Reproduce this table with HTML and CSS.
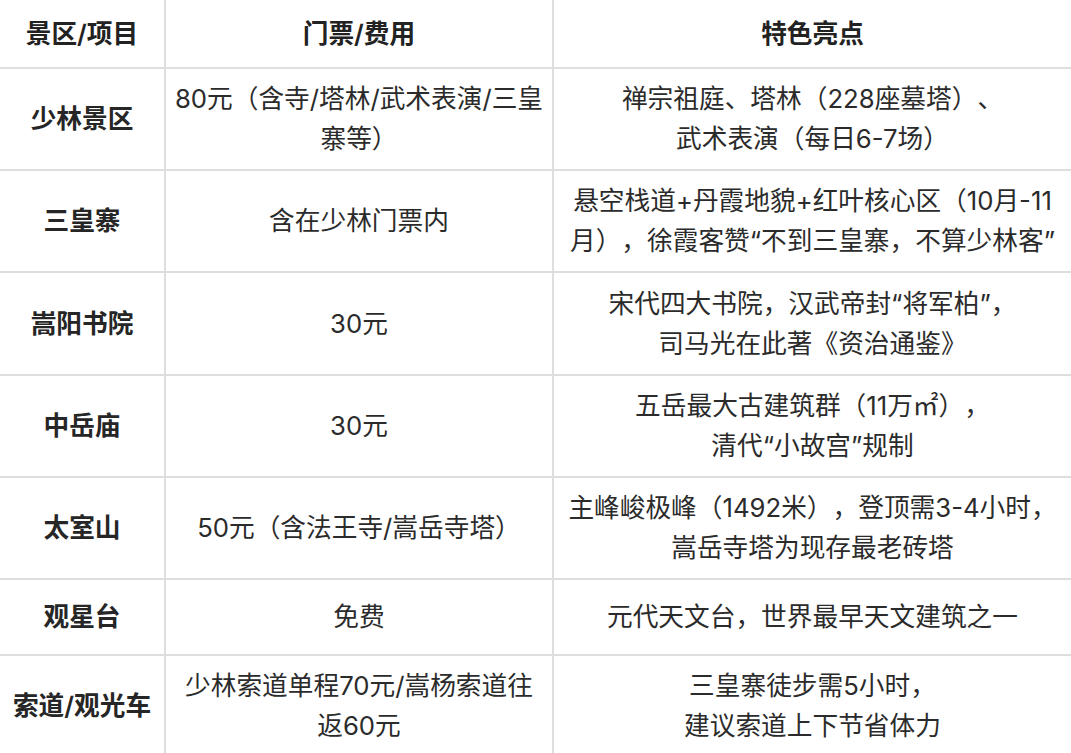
FILE: index.html
```html
<!DOCTYPE html>
<html lang="zh-CN">
<head>
<meta charset="utf-8">
<title>登封景区门票</title>
<link rel="stylesheet" href="styles.css">
</head>
<body>
<div class="grid">
  <div class="cell head">景区/项目</div>
  <div class="cell head">门票/费用</div>
  <div class="cell head">特色亮点</div>

  <div class="cell name">少林景区</div>
  <div class="cell">80元（含寺/塔林/武术表演/三皇<br>寨等）</div>
  <div class="cell">禅宗祖庭、塔林（228座墓塔）、<br>武术表演（每日6-7场）</div>

  <div class="cell name">三皇寨</div>
  <div class="cell">含在少林门票内</div>
  <div class="cell">悬空栈道+丹霞地貌+红叶核心区（10月-11<br>月），徐霞客赞“不到三皇寨，不算少林客”</div>

  <div class="cell name">嵩阳书院</div>
  <div class="cell">30元</div>
  <div class="cell">宋代四大书院，汉武帝封“将军柏”，<br>司马光在此著《资治通鉴》</div>

  <div class="cell name">中岳庙</div>
  <div class="cell">30元</div>
  <div class="cell">五岳最大古建筑群（11万㎡），<br>清代“小故宫”规制</div>

  <div class="cell name">太室山</div>
  <div class="cell">50元（含法王寺/嵩岳寺塔）</div>
  <div class="cell">主峰峻极峰（1492米），登顶需3-4小时，<br>嵩岳寺塔为现存最老砖塔</div>

  <div class="cell name">观星台</div>
  <div class="cell">免费</div>
  <div class="cell">元代天文台，世界最早天文建筑之一</div>

  <div class="cell name">索道/观光车</div>
  <div class="cell">少林索道单程70元/嵩杨索道往<br>返60元</div>
  <div class="cell">三皇寨徒步需5小时，<br>建议索道上下节省体力</div>
</div>
</body>
</html>
```

FILE: styles.css
```css
html, body {
  margin: 0;
  padding: 0;
  background: #ffffff;
}

body {
  width: 1071px;
  height: 753px;
  overflow: hidden;
  font-family: "Inter", "Noto Sans CJK SC", sans-serif;
  font-size: 25.7px;
  line-height: 40px;
  color: #2b2b2b;
  text-spacing-trim: space-all;
}

.grid {
  display: grid;
  grid-template-columns: 164px 386px 1fr;
  grid-template-rows: 67px 100px 100px 101px 100px 100px 74px 100px;
  gap: 2px;
  background: #dedede;
  width: 1071px;
}

.cell {
  background: #ffffff;
  display: flex;
  align-items: center;
  justify-content: center;
  text-align: center;
  white-space: nowrap;
}

.head {
  font-weight: 600;
  color: #222222;
}

.name {
  font-weight: 600;
  color: #262626;
}
```
